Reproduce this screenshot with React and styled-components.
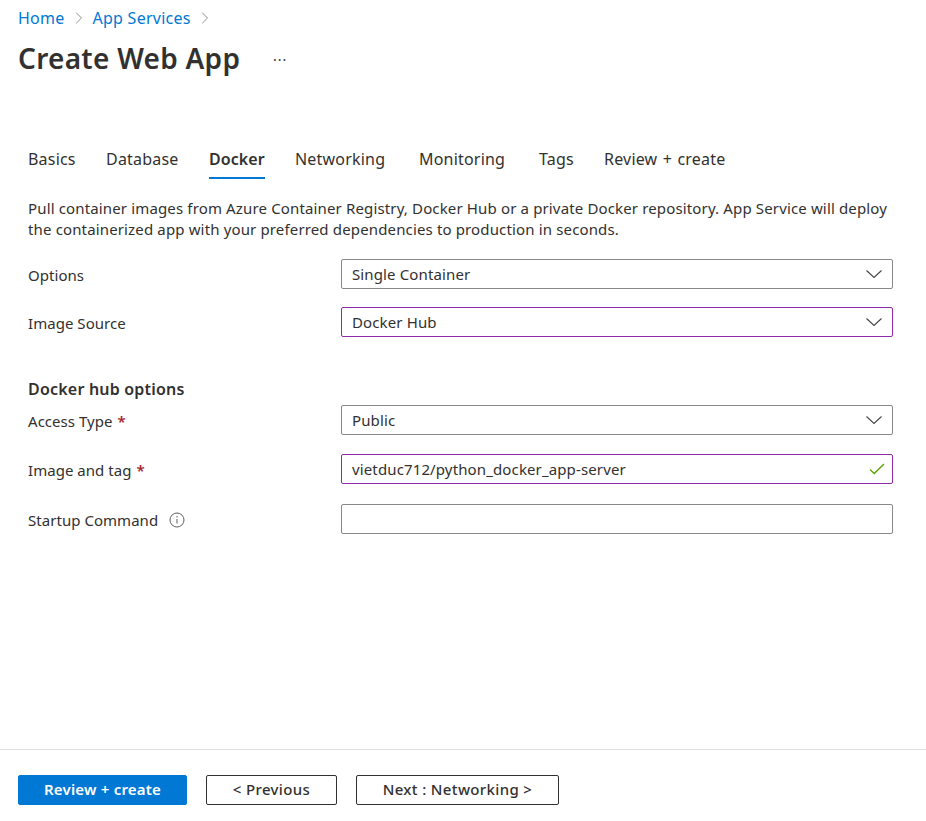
import styled, { createGlobalStyle } from 'styled-components';
import { ChevronRight } from 'lucide-react';

const GlobalStyle = createGlobalStyle`
  html, body {
    margin: 0;
    padding: 0;
    background: #fff;
  }
  body {
    font-family: "Noto Sans", "Open Sans", sans-serif;
    color: #323130;
  }
`;

const Page = styled.div`
  display: flex;
  flex-direction: column;
  height: 821px;
  overflow: hidden;
`;
const Header = styled.header`
  padding: 8px 18px 0;
`;
const Breadcrumb = styled.nav`
  display: flex;
  align-items: center;
  height: 20px;
  font-size: 16px;
  letter-spacing: 0.25px;
`;
const CrumbLink = styled.a`
  color: #0078d4;
  margin-right: 4px;
`;
const CrumbSep = styled(ChevronRight)`
  width: 20px;
  height: 20px;
  color: #797775;
  stroke-width: 1;
  margin-right: 4px;
`;
const TitleRow = styled.div`
  display: flex;
  align-items: center;
  margin-top: 10px;
  height: 40px;
`;
const Title = styled.h1`
  margin: 0;
  font-size: 28px;
  font-weight: 600;
  letter-spacing: 0.27px;
  width: 255px;
  color: #323130;
  white-space: nowrap;
`;
const More = styled.span`
  font-size: 14px;
  line-height: 1;
  color: #323130;
  letter-spacing: 1px;
  padding-top: 4px;
`;
const Main = styled.main`
  padding: 0 33px 0 28px;
`;
const Tabs = styled.div`
  display: flex;
  margin-top: 61px;
  height: 40px;
`;
const Tab = styled.div`
  flex: 0 0 ${p => p.$w}px;
  font-size: 16px;
  line-height: 40px;
  letter-spacing: ${p => (p.$active ? 0.05 : 0.2)}px;
  word-spacing: 1px;
  font-weight: ${p => (p.$active ? 600 : 400)};
  white-space: nowrap;
`;
const TabLabel = styled.span`
  display: inline-block;
  height: 38px;
  border-bottom: ${p => (p.$active ? '2px solid #0078d4' : 'none')};
`;
const Description = styled.p`
  margin: 19px 0 0;
  font-size: 15px;
  line-height: 21px;
  letter-spacing: 0.145px;
  white-space: nowrap;
`;
const FieldRow = styled.div`
  display: flex;
  align-items: center;
  height: 30px;
  margin-top: ${p => p.$mt}px;
`;
const Label = styled.label`
  display: flex;
  align-items: center;
  flex: 0 0 313px;
  font-size: 15px;
  letter-spacing: 0.04px;
  padding-top: 2px;
`;
const Required = styled.span`
  color: #a4262c;
  font-weight: 600;
  margin-left: 5px;
  font-size: 15px;
`;
const InfoIcon = styled.svg`
  width: 16px;
  height: 16px;
  margin-left: 11px;
`;
const Control = styled.div`
  flex: 1;
  height: 30px;
  box-sizing: border-box;
  display: flex;
  align-items: center;
  justify-content: space-between;
  padding: 0 10px;
  border: 1px solid ${p => (p.$dirty ? '#8f2aa8' : '#8a8886')};
  border-radius: 2px;
  font-size: 15px;
  letter-spacing: 0.13px;
`;
const Section = styled.h2`
  margin: 42px 0 0;
  font-size: 16px;
  line-height: 20px;
  font-weight: 600;
  letter-spacing: 0.2px;
`;
const Footer = styled.footer`
  margin-top: auto;
  height: 72px;
  box-sizing: border-box;
  border-top: 1px solid #e1dfdd;
  padding: 25px 18px 0;
  display: flex;
  gap: 19px;
`;
const Button = styled.button`
  height: 30px;
  width: ${p => p.$w}px;
  box-sizing: border-box;
  padding: 0 0 2px;
  border-radius: 2px;
  border: 1px solid ${p => (p.$primary ? '#0078d4' : '#323130')};
  background: ${p => (p.$primary ? '#0078d4' : '#fff')};
  color: ${p => (p.$primary ? '#fff' : '#323130')};
  font-family: inherit;
  font-size: 15px;
  font-weight: ${p => (p.$primary ? 600 : 500)};
  letter-spacing: ${p => (p.$primary ? 0.2 : 0.35)}px;
`;
const CheckMark = styled.svg`
  width: 16px;
  height: 12px;
  margin-right: -3px;
`;

const Chevron = () => (
  <svg width="16" height="10" viewBox="0 0 16 10" fill="none">
    <path d="M0.5 1.5 L8 8.5 L15.5 1.5" stroke="#484644" strokeWidth="1.1" />
  </svg>
);

const tabs = [
  ['Basics', 78],
  ['Database', 103],
  ['Docker', 86, true],
  ['Networking', 124],
  ['Monitoring', 120],
  ['Tags', 65],
  ['Review + create', 130],
];

const Select = ({ value, dirty }) => (
  <Control $dirty={dirty}>
    <span>{value}</span>
    <Chevron />
  </Control>
);

export default function App() {
  return (
    <Page>
      <GlobalStyle />
      <Header>
        <Breadcrumb>
          <CrumbLink>Home</CrumbLink>
          <CrumbSep />
          <CrumbLink>App Services</CrumbLink>
          <CrumbSep />
        </Breadcrumb>
        <TitleRow>
          <Title>Create Web App</Title>
          <More>···</More>
        </TitleRow>
      </Header>
      <Main>
        <Tabs>
          {tabs.map(([name, w, active]) => (
            <Tab key={name} $w={w} $active={active}>
              <TabLabel $active={active}>{name}</TabLabel>
            </Tab>
          ))}
        </Tabs>
        <Description>
          Pull container images from Azure Container Registry, Docker Hub or a private Docker repository. App Service will deploy
          <br />
          the containerized app with your preferred dependencies to production in seconds.
        </Description>
        <FieldRow $mt={19}>
          <Label>Options</Label>
          <Select value="Single Container" />
        </FieldRow>
        <FieldRow $mt={18}>
          <Label>Image Source</Label>
          <Select value="Docker Hub" dirty />
        </FieldRow>
        <Section>Docker hub options</Section>
        <FieldRow $mt={6}>
          <Label>
            Access Type<Required>*</Required>
          </Label>
          <Select value="Public" />
        </FieldRow>
        <FieldRow $mt={19}>
          <Label>
            Image and tag<Required>*</Required>
          </Label>
          <Control $dirty>
            <span>vietduc712/python_docker_app-server</span>
            <CheckMark viewBox="0 0 16 12" fill="none">
              <path d="M1 6.5 L5.2 10.5 L15 1" stroke="#57a300" strokeWidth="1.3" />
            </CheckMark>
          </Control>
        </FieldRow>
        <FieldRow $mt={20}>
          <Label>
            Startup Command
            <InfoIcon viewBox="0 0 16 16" fill="none">
              <circle cx="8" cy="8" r="7" stroke="#605e5c" strokeWidth="1" />
              <path d="M8 7v4.5" stroke="#605e5c" strokeWidth="1" />
              <circle cx="8" cy="4.8" r="0.7" fill="#605e5c" />
            </InfoIcon>
          </Label>
          <Control />
        </FieldRow>
      </Main>
      <Footer>
        <Button $primary $w={169}>Review + create</Button>
        <Button $w={131}>&lt; Previous</Button>
        <Button $w={203}>Next : Networking &gt;</Button>
      </Footer>
    </Page>
  );
}
